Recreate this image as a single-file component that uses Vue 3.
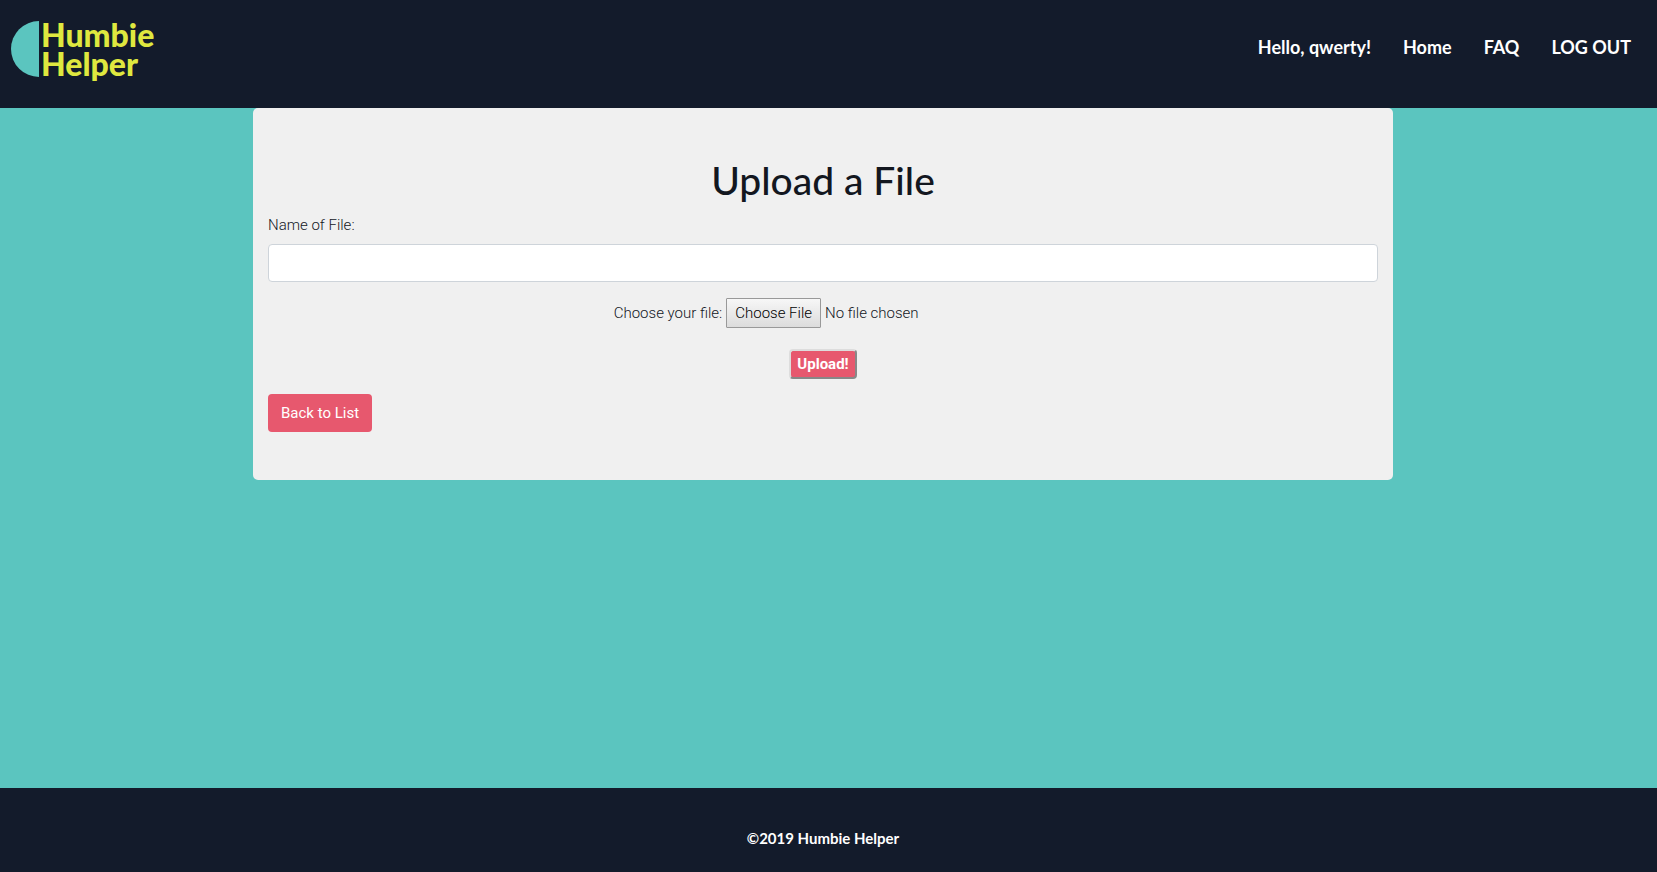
<script setup>
import { ref } from 'vue'

const fileName = ref('')
const links = ['Hello, qwerty!', 'Home', 'FAQ', 'LOG OUT']
</script>

<template>
  <div class="page">
    <header class="header">
      <a class="brand" href="#">
        <svg class="mark" viewBox="0 0 28 56" aria-hidden="true">
          <path d="M28 0A28 28 0 0 0 28 56Z" fill="#5bc5bf" />
        </svg>
        <span class="wordmark">Humbie<br />Helper</span>
      </a>
      <nav class="nav">
        <a v-for="link in links" :key="link" href="#">{{ link }}</a>
      </nav>
    </header>
    <main class="main">
      <section class="card">
        <h1>Upload a File</h1>
        <form @submit.prevent>
          <label class="name-label" for="name">Name of File:</label>
          <input id="name" v-model="fileName" class="name" type="text" />
          <div class="file-row">
            <label for="file">Choose your file:</label>
            <input id="file" class="file" type="file" />
          </div>
          <button class="upload" type="submit">Upload!</button>
        </form>
        <a class="back" href="#">Back to List</a>
      </section>
    </main>
    <footer class="footer">©2019 Humbie Helper</footer>
  </div>
</template>

<style>
body {
  margin: 0;
  background: #5bc5bf;
}
</style>

<style scoped>
* {
  box-sizing: border-box;
}
.page {
  display: flex;
  flex-direction: column;
  min-height: 100vh;
  background: #5bc5bf;
  color: #13171f;
  font: 300 15px/24px Roboto, "Open Sans", sans-serif;
}
.header {
  display: flex;
  justify-content: space-between;
  align-items: flex-start;
  height: 108px;
  padding: 20px 26px 0 11px;
  background: #131b2b;
  font-family: Lato, sans-serif;
}
.brand {
  display: flex;
  gap: 2px;
  color: #dfe83f;
  text-decoration: none;
}
.mark {
  width: 28px;
  height: 56px;
  margin-top: 1px;
}
.wordmark {
  font-size: 32px;
  font-weight: 900;
  line-height: 29px;
}
.nav {
  display: flex;
  gap: 32px;
  padding-top: 15px;
}
.nav a {
  color: #fff;
  font-size: 18px;
  font-weight: 700;
  text-decoration: none;
}
.main {
  flex: 1;
  padding-right: 11px;
}
.card {
  max-width: 1140px;
  margin: 0 auto;
  padding: 48px 15px;
  border-radius: 5px;
  background: #f0f0f0;
}
h1 {
  margin: 0 0 8px;
  font: 500 39px/48px Lato, sans-serif;
  text-align: center;
}
form {
  display: flex;
  flex-direction: column;
  align-items: center;
}
.name-label {
  align-self: flex-start;
  margin-bottom: 6px;
  line-height: 26px;
}
.name {
  width: 100%;
  height: 38px;
  margin-bottom: 16px;
  padding: 6px 12px;
  border: 1px solid #ced4da;
  border-radius: 4px;
  background: #fff;
  font: inherit;
}
.file-row {
  display: flex;
  align-items: center;
  gap: 4px;
  margin-bottom: 21px;
  line-height: 30px;
}
.file {
  width: 306px;
  height: 30px;
  color: inherit;
  font: inherit;
}
.file::file-selector-button {
  height: 30px;
  margin: 0 4px 0 0;
  padding: 0 8px;
  border: 1px solid #999;
  border-radius: 1px;
  background: linear-gradient(#f7f7f7, #dcdcdc);
  color: #000;
  font: inherit;
  line-height: 28px;
}
.upload {
  height: 30px;
  margin-bottom: 14px;
  padding: 0 6px;
  border: 2px solid;
  border-color: #ddd #888 #888 #ddd;
  border-radius: 4px;
  background: #e7586e;
  color: #fff;
  font: inherit;
  font-weight: 700;
}
.back {
  display: inline-block;
  margin-top: 1px;
  padding: 7px 13px;
  border-radius: 4px;
  background: #e7586e;
  color: #fff;
  font-weight: 400;
  text-decoration: none;
  vertical-align: top;
}
.footer {
  height: 84px;
  padding: 38px 11px 0 0;
  background: #131b2b;
  color: #fff;
  font: 700 15px/24px Lato, sans-serif;
  text-align: center;
}
</style>
